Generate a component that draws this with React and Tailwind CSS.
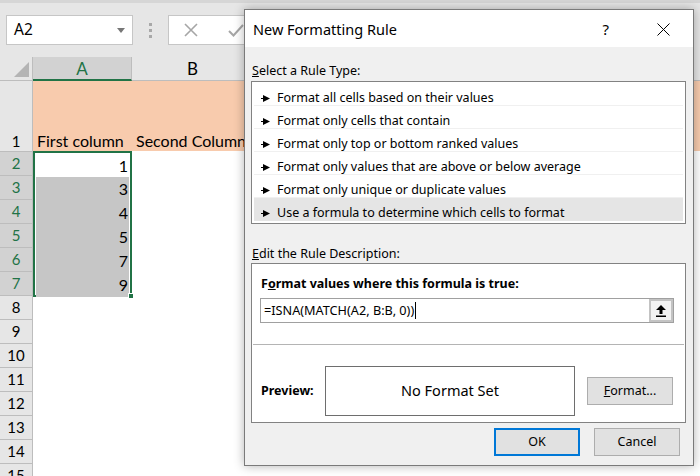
import React from "react";

const VALUES = [3, 4, 5, 7, 9];
const LOWER_ROWS = [8, 9, 10, 11, 12, 13, 14, 15];
const RULES = [
  "Format all cells based on their values",
  "Format only cells that contain",
  "Format only top or bottom ranked values",
  "Format only values that are above or below average",
  "Format only unique or duplicate values",
  "Use a formula to determine which cells to format",
];

const sheetFont = { fontFamily: "Lato, 'Liberation Sans', sans-serif" };
const uiFont = { fontFamily: "'Noto Sans', 'Open Sans', sans-serif" };

function RuleArrow() {
  return (
    <svg width="9" height="7" viewBox="0 0 9 7" className="shrink-0">
      <rect x="0" y="3" width="3" height="1" fill="#000" />
      <path d="M2 0 L9 3.5 L2 7 Z" fill="#000" />
    </svg>
  );
}

function Dialog() {
  return (
    <div
      className="absolute left-[244px] top-[9px] w-[450px] h-[457px] border border-[#7a7a7a] bg-[#f0f0f0] shadow-[0_0_10px_rgba(0,0,0,0.3)] text-[12.5px] text-black"
      style={uiFont}
    >
      {/* Title bar */}
      <div className="h-[37px] bg-white flex items-center pl-[8px] pt-[2px]">
        <span className="text-[14.5px]">New Formatting Rule</span>
        <span className="ml-auto mr-[48px] text-[15px]">?</span>
        <svg width="13" height="13" viewBox="0 0 13 13" className="mr-[23px]">
          <path d="M0.5 0.5 L12.5 12.5 M12.5 0.5 L0.5 12.5" stroke="#000" strokeWidth="1" />
        </svg>
      </div>

      <div className="pl-[6px] pr-[7px] pt-[14px]">
        <div className="leading-[19px] pl-[1px]">
          <span className="underline">S</span>elect a Rule Type:
        </div>
        <div className="mt-[1px] border border-[#828282] bg-white pt-[1px] pb-[2px] px-[2px]">
          {RULES.map((r, i) => (
            <div
              key={r}
              className={`h-[23px] flex items-center gap-[7px] pl-[7px] pt-[8px] ${
                i === RULES.length - 1 ? "bg-[#e5e5e5]" : "border-b border-[#f0f0f0]"
              }`}
            >
              <RuleArrow />
              <span>{r}</span>
            </div>
          ))}
        </div>

        <div className="mt-[20px] leading-[19px] pl-[1px]">
          <span className="underline">E</span>dit the Rule Description:
        </div>
        <div className="h-[160px] border border-[#828282] bg-white">
          <div className="pt-[11px] pl-[9px] font-bold leading-[18px]">
            F<span className="underline">o</span>rmat values where this formula is true:
          </div>
          <div className="mt-[5px] ml-[8px] w-[414px] h-[25px] border border-[#a0a0a0] flex items-center">
            <span className="pl-[3px] text-[12.7px]">=ISNA(MATCH(A2, B:B, 0))</span>
            <span className="w-px h-[17px] bg-black ml-[1px]" />
            <div className="ml-auto w-[24px] h-full border-2 border-[#c3c3c3] bg-[#f3f3f3] flex items-center justify-center">
              <svg width="10" height="12" viewBox="0 0 10 12">
                <path d="M5 0 L10 5 L6.5 5 L6.5 9 L3.5 9 L3.5 5 L0 5 Z" fill="#000" />
                <rect x="0" y="10.5" width="10" height="1.5" fill="#000" />
              </svg>
            </div>
          </div>
          <div className="mt-[21px] mx-px h-px bg-[#b4b4b4]" />
          <div className="mt-[21px] flex items-center pl-[9px]">
            <span className="font-bold w-[64px]">Preview:</span>
            <div className="w-[250px] h-[50px] border border-[#6e6e6e] flex items-center justify-center text-[14.5px]">
              No Format Set
            </div>
            <button className="ml-[12px] w-[86px] h-[28px] border border-[#adadad] bg-[#e1e1e1]">
              <span className="underline">F</span>ormat...
            </button>
          </div>
        </div>

        <div className="mt-[5px] flex justify-end gap-[14px] pr-[6px]">
          <button className="w-[86px] h-[28px] border-2 border-[#0078d7] bg-[#e1e1e1]">OK</button>
          <button className="w-[86px] h-[28px] border border-[#adadad] bg-[#e1e1e1]">Cancel</button>
        </div>
      </div>
    </div>
  );
}

export default function App() {
  return (
    <div className="relative w-[700px] h-[476px] overflow-hidden bg-white" style={sheetFont}>
      {/* Formula bar */}
      <div className="h-[3px] bg-[#d6d6d6]" />
      <div className="h-[54px] bg-[#e6e6e6] flex items-start pt-[12px] pl-[6px]">
        <div className="w-[127px] h-[30px] bg-white border border-[#c6c6c6] flex items-center pl-[7px] pr-[7px]" style={uiFont}>
          <span className="text-[15.5px]">A2</span>
          <svg width="8" height="5" viewBox="0 0 8 5" className="ml-auto">
            <path d="M0 0 L8 0 L4 5 Z" fill="#777" />
          </svg>
        </div>
        <div className="ml-[16px] mt-[8px] flex flex-col gap-[3px]">
          <span className="w-[3px] h-[3px] bg-[#a8a8a8]" />
          <span className="w-[3px] h-[3px] bg-[#a8a8a8]" />
          <span className="w-[3px] h-[3px] bg-[#a8a8a8]" />
        </div>
        <div className="ml-[16px] w-[200px] h-[30px] bg-white border border-[#c6c6c6] flex items-center pl-[15px] gap-[30px]">
          <svg width="14" height="14" viewBox="0 0 14 14">
            <path d="M1 1 L13 13 M13 1 L1 13" stroke="#a6a6a6" strokeWidth="1.6" />
          </svg>
          <svg width="16" height="13" viewBox="0 0 16 13">
            <path d="M1 7 L5.5 11.5 L15 1" stroke="#a6a6a6" strokeWidth="2" fill="none" />
          </svg>
        </div>
      </div>

      {/* Grid */}
      <div className="flex">
        {/* Row headers */}
        <div className="w-[33px] shrink-0 flex flex-col border-r border-[#bdbdbd] bg-[#e6e6e6] text-[15px] text-black">
          <div className="h-[24px] border-b border-[#bdbdbd] flex items-end justify-end pr-[3px] pb-[3px]">
            <svg width="15" height="15" viewBox="0 0 15 15">
              <path d="M15 0 L15 15 L0 15 Z" fill="#b4b4b4" />
            </svg>
          </div>
          <div className="h-[71px] border-b border-[#bdbdbd] flex items-end justify-center leading-[20px]">1</div>
          {[2, 3, 4, 5, 6, 7].map((n) => (
            <div key={n} className="h-[24px] border-b border-[#bdbdbd] bg-[#d2d2d2] text-[#217346] flex items-center justify-center">
              {n}
            </div>
          ))}
          {LOWER_ROWS.map((n) => (
            <div key={n} className="h-[24px] border-b border-[#bdbdbd] flex items-center justify-center">
              {n}
            </div>
          ))}
        </div>

        {/* Column A */}
        <div className="w-[99px] shrink-0 flex flex-col text-[16px]">
          <div className="h-[24px] bg-[#d2d2d2] border-b-2 border-[#217346] border-r border-r-[#bdbdbd] flex items-center justify-center text-[#217346] text-[17px] pt-[1px]">
            A
          </div>
          <div className="h-[70px] bg-[#f8cbad] flex items-end pl-[4px] leading-[20px] whitespace-nowrap">First column</div>
          <div className="relative h-[146px] border-2 border-[#217346] p-px flex flex-col">
            <div className="h-[23px] flex items-center justify-end pr-[1px]">1</div>
            <div className="flex-1 bg-[#c6c6c6] flex flex-col">
              {VALUES.map((v) => (
                <div key={v} className="h-[24px] flex items-center justify-end pr-px">
                  {v}
                </div>
              ))}
            </div>
            <span className="absolute -right-[4px] -bottom-[4px] w-[6px] h-[6px] bg-[#217346] border border-white" />
          </div>
        </div>

        {/* Column B and beyond */}
        <div className="flex-1 flex flex-col text-[16px]">
          <div className="h-[24px] bg-[#e6e6e6] border-b border-[#bdbdbd] flex">
            <div className="w-[121px] flex items-center justify-center text-[17px] pt-[1px]">B</div>
          </div>
          <div className="h-[70px] bg-[#f8cbad] flex items-end pl-[4px] leading-[20px] whitespace-nowrap">Second Column</div>
        </div>
      </div>

      <Dialog />
    </div>
  );
}
